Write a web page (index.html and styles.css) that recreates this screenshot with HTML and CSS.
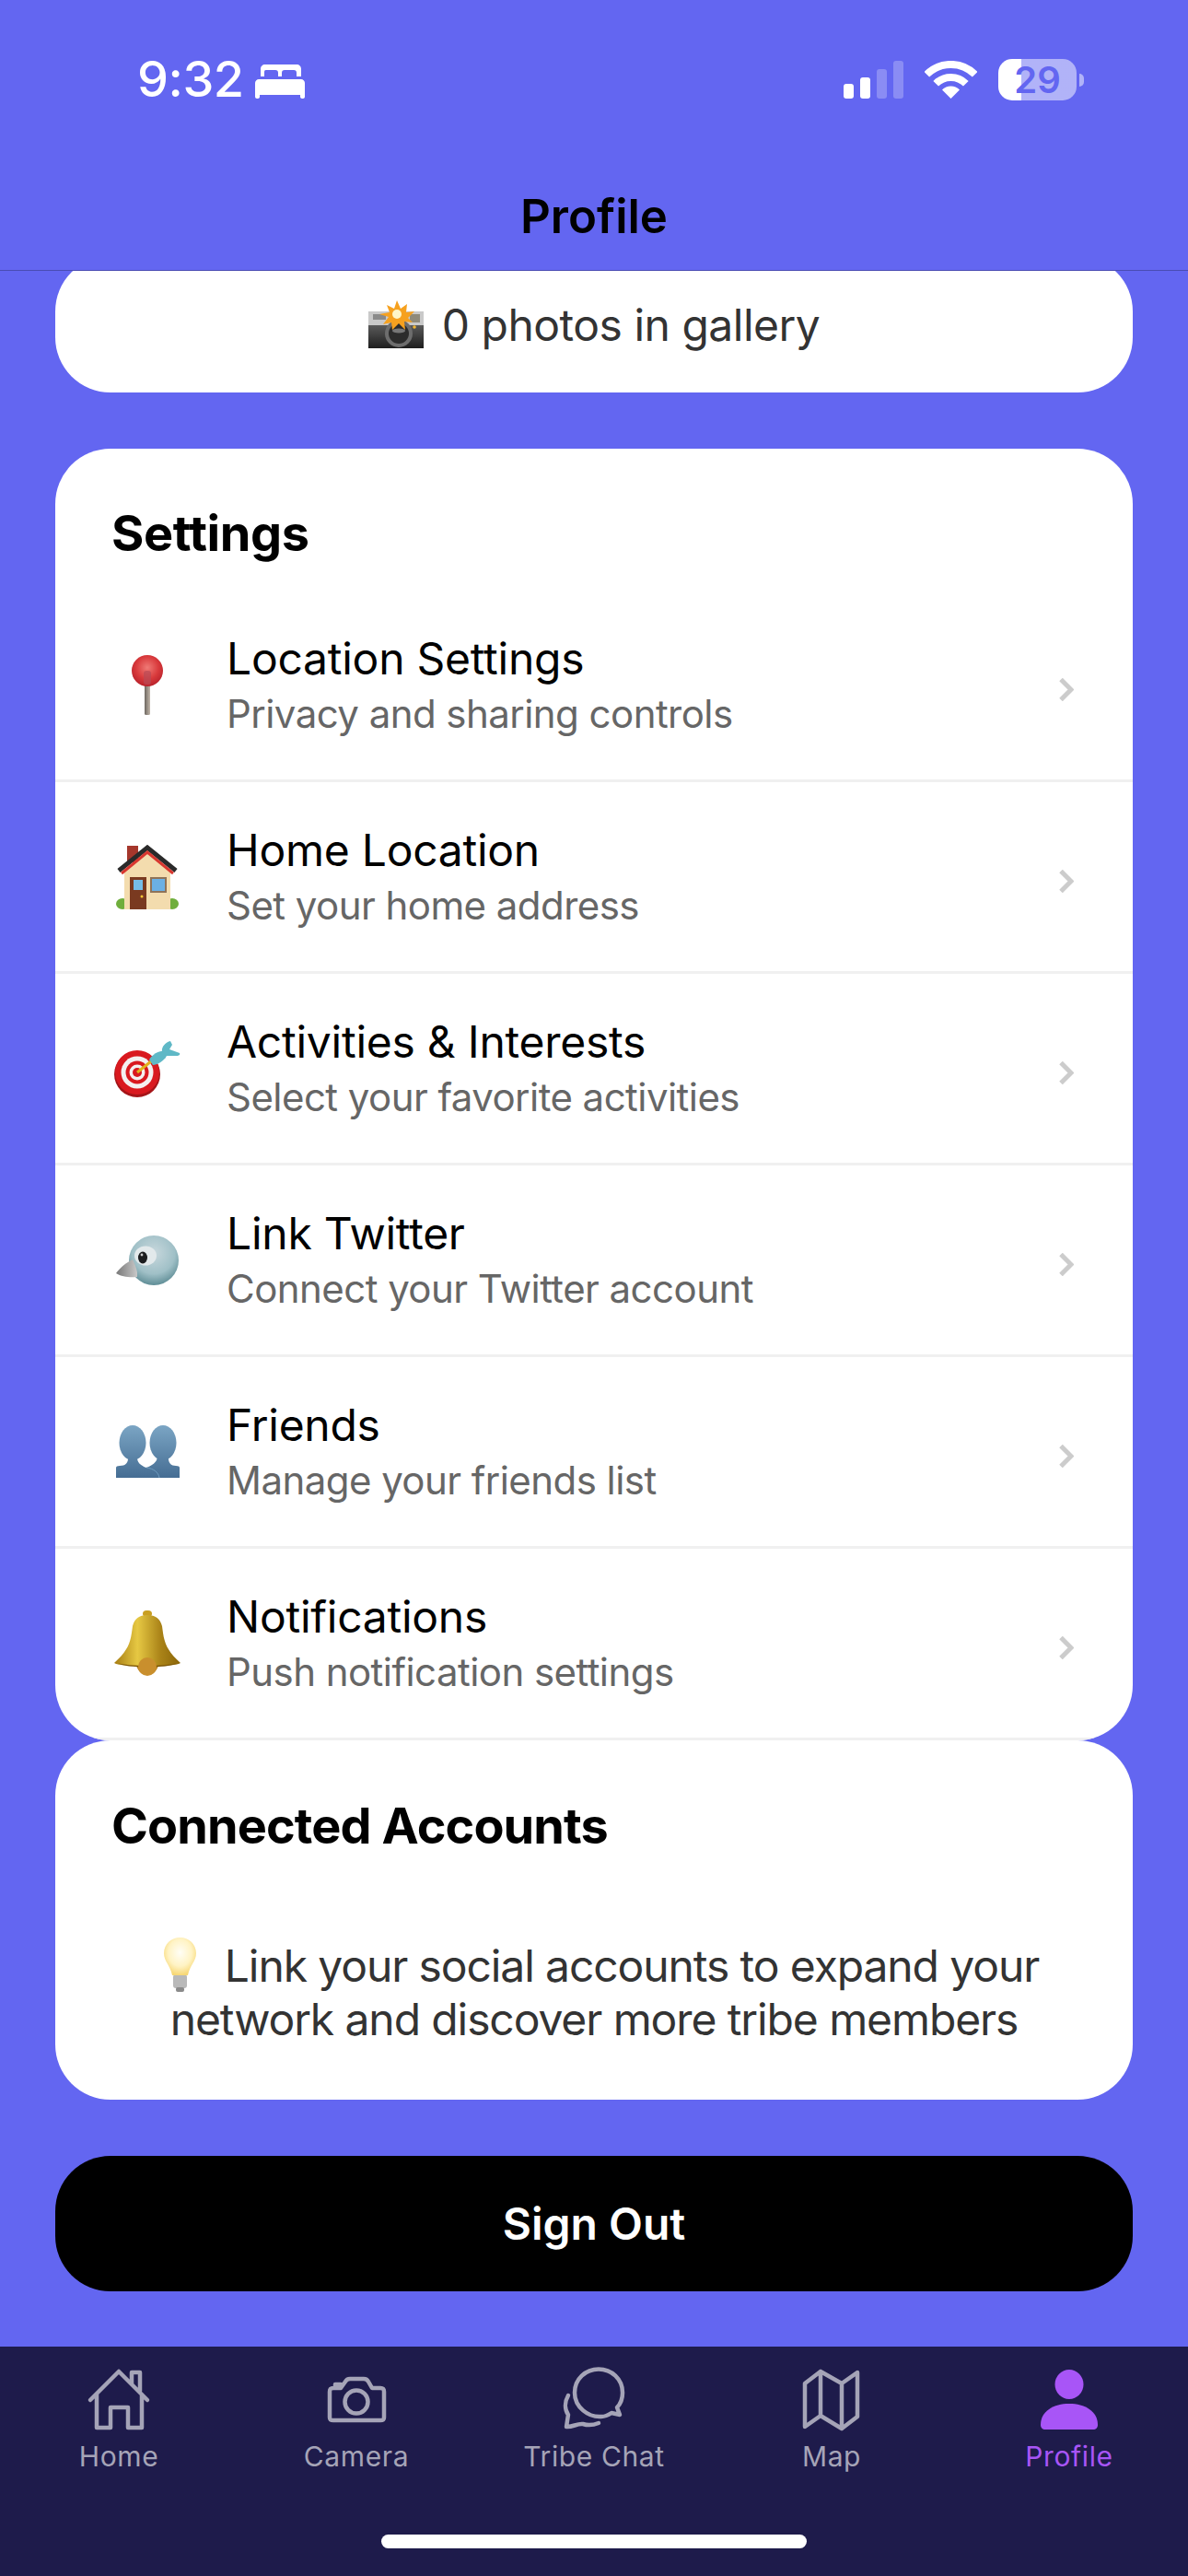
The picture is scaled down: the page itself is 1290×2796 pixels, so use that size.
FILE: index.html
```html
<!DOCTYPE html>
<html lang="en">
<head>
<meta charset="utf-8">
<title>Profile</title>
<link rel="stylesheet" href="styles.css">
</head>
<body>
<div class="app">
  <header class="header">
    <div class="status">
      <div class="status-left">
        <span class="time">9:32</span>
        <svg class="bed" viewBox="0 0 54 37"><path fill="#fff" d="M6 13V5c0-3 2-5 5-5h34c3 0 5 2 5 5v8h-5V9c0-2-1-3-3-3H32c-2 0-3 1-3 3v4h-4V9c0-2-1-3-3-3H12c-2 0-2 1-2 3v4z"/><path fill="#fff" d="M4 16h46c2 0 4 2 4 4v15c0 1-1 2-2 2h-1c-1 0-2-1-2-2v-2H5v2c0 1-1 2-2 2H2c-1 0-2-1-2-2V20c0-2 2-4 4-4z"/></svg>
      </div>
      <div class="status-right">
        <div class="signal"><i class="bar b1"></i><i class="bar b2"></i><i class="bar b3 dim"></i><i class="bar b4 dim"></i></div>
        <svg class="wifi" viewBox="0 0 57 41"><path fill="none" stroke="#fff" stroke-width="8" d="M2.3 14.800A37 37 0 0 1 54.700 14.800M12.200 24.700A23 23 0 0 1 44.800 24.700"/><path fill="#fff" d="M28.500 41L19 31.500A13.400 13.400 0 0 1 38 31.500Z"/></svg>
        <div class="battery"><div class="battery-body">29</div><div class="battery-nub"></div></div>
      </div>
    </div>
    <h1 class="title">Profile</h1>
  </header>

  <main class="main">
    <section class="card gallery">
      <svg class="emoji-cam" viewBox="0 0 60 52">
        <defs><linearGradient id="camb" x1="0" y1="0" x2="0" y2="1"><stop offset="0" stop-color="#5a5a5a"/><stop offset="1" stop-color="#1e1e1e"/></linearGradient></defs>
        <rect x="0" y="12" width="60" height="17" fill="#c9c9c9"/>
        <rect x="0" y="27" width="60" height="25" fill="url(#camb)"/>
        <rect x="5" y="15" width="14" height="6" fill="#8a8a8a"/>
        <rect x="45" y="15" width="11" height="9" fill="#8f8a7a"/>
        <circle cx="33" cy="36" r="15" fill="#6d6d6d"/><circle cx="33" cy="36" r="11" fill="#2c2c2c"/><ellipse cx="33" cy="33" rx="7" ry="2.500" fill="#777"/>
        <circle cx="50" cy="29" r="1.800" fill="#f2b632"/>
        <path fill="#f6a11f" d="M31 0l4 9 7-5-1 9 9-1-7 7 5 5-9-1 1 9-7-7-7 7-1-8-9 2 6-8-10-3 11-2-3-8 8 4z"/>
        <circle cx="31" cy="15" r="5" fill="#fff6c8"/>
      </svg>
      <span>0 photos in gallery</span>
    </section>

    <section class="card settings">
      <h2 class="card-title">Settings</h2>
      <div class="row">
        <div class="row-icon">
          <svg class="e-pin" viewBox="0 0 34 65">
            <defs><radialGradient id="pinr" cx=".5" cy=".4" r=".6"><stop offset="0" stop-color="#ef7a76"/><stop offset=".6" stop-color="#d93a3c"/><stop offset="1" stop-color="#b9222c"/></radialGradient><linearGradient id="pins" x1="0" x2="1" y1="0" y2="0"><stop offset="0" stop-color="#6d6760"/><stop offset="1" stop-color="#c2b6aa"/></linearGradient></defs>
            <rect x="14" y="30" width="6" height="35" rx="1.500" fill="url(#pins)"/>
            <circle cx="17" cy="17" r="17" fill="url(#pinr)"/>
            <rect x="13" y="17" width="8" height="15" rx="3" fill="#b84a55" opacity=".7"/>
          </svg>
        </div>
        <div class="row-text"><div class="row-title">Location Settings</div><div class="row-sub">Privacy and sharing controls</div></div>
        <svg class="chev" viewBox="0 0 16 25"><path fill="none" stroke="#ccc" stroke-width="5" d="M2 1.500L13 12.500L2 23.500"/></svg>
      </div>
      <div class="row">
        <div class="row-icon">
          <svg class="e-house" viewBox="0 0 68 70">
            <ellipse cx="7" cy="64" rx="7" ry="6" fill="#6fae3c"/><ellipse cx="61" cy="64" rx="7" ry="6" fill="#6fae3c"/>
            <rect x="12" y="1" width="12" height="18" fill="#a5372c"/>
            <path fill="#f3dcae" d="M9 28L34 6l25 22v42H9z"/>
            <path fill="none" stroke="#2a2a2a" stroke-width="5" d="M3 28L34 3l31 25"/>
            <path fill="none" stroke="#d8372f" stroke-width="3" d="M6 31L34 8l28 23"/>
            <rect x="15" y="35" width="18" height="35" fill="#7a3a20"/><rect x="19" y="38" width="10" height="11" fill="#76bde8"/><circle cx="28" cy="56" r="1.500" fill="#f5c633"/>
            <rect x="37" y="35" width="18" height="17" fill="#8f7358"/><rect x="39" y="37" width="14" height="13" fill="#6bb0e4"/>
          </svg>
        </div>
        <div class="row-text"><div class="row-title">Home Location</div><div class="row-sub">Set your home address</div></div>
        <svg class="chev" viewBox="0 0 16 25"><path fill="none" stroke="#ccc" stroke-width="5" d="M2 1.500L13 12.500L2 23.500"/></svg>
      </div>
      <div class="row">
        <div class="row-icon">
          <svg class="e-target" viewBox="0 0 72 62">
            <circle cx="25" cy="37" r="25" fill="#a51418"/><circle cx="25" cy="35" r="24" fill="#d9191f"/><circle cx="25" cy="35" r="17.500" fill="#f4f0f0"/><circle cx="25" cy="35" r="12.500" fill="#d9191f"/><circle cx="25" cy="35" r="8.500" fill="#f4f0f0"/><circle cx="25" cy="35" r="5" fill="#d9191f"/>
            <path stroke="#e2b11a" stroke-width="3" d="M25 35L40 23"/>
            <path fill="#5fb8c6" d="M38 21c4-6 11-10 17-9l2 5c-3 6-11 10-15 10z"/>
            <path fill="#5fb8c6" d="M52 13c-1-6 4-11 9-12l2 4-3 5 11 4c1 2-1 3-3 3l-9 0-3 0z"/>
          </svg>
        </div>
        <div class="row-text"><div class="row-title">Activities &amp; Interests</div><div class="row-sub">Select your favorite activities</div></div>
        <svg class="chev" viewBox="0 0 16 25"><path fill="none" stroke="#ccc" stroke-width="5" d="M2 1.500L13 12.500L2 23.500"/></svg>
      </div>
      <div class="row">
        <div class="row-icon">
          <svg class="e-bird" viewBox="0 0 68 54">
            <defs><radialGradient id="birdr" cx=".5" cy=".35" r=".68"><stop offset="0" stop-color="#c8d8dd"/><stop offset=".62" stop-color="#a0c0c7"/><stop offset="1" stop-color="#578790"/></radialGradient><linearGradient id="beak" x1="0" x2="1" y1="0" y2="0"><stop offset="0" stop-color="#777"/><stop offset="1" stop-color="#c8c8c8"/></linearGradient></defs>
            <circle cx="41" cy="27" r="27" fill="url(#birdr)"/>
            <ellipse cx="32" cy="22" rx="12" ry="10.500" fill="#e2e9eb"/>
            <ellipse cx="29" cy="24" rx="5" ry="6.500" fill="#1b1d1f"/><circle cx="28" cy="21" r="1.400" fill="#ccc"/>
            <path fill="url(#beak)" d="M0 41C5 34 12 29 18 26c2 4 4 9 5 14l0 5c-7 1-17 0-23-4z"/>
          </svg>
        </div>
        <div class="row-text"><div class="row-title">Link Twitter</div><div class="row-sub">Connect your Twitter account</div></div>
        <svg class="chev" viewBox="0 0 16 25"><path fill="none" stroke="#ccc" stroke-width="5" d="M2 1.500L13 12.500L2 23.500"/></svg>
      </div>
      <div class="row">
        <div class="row-icon">
          <svg class="e-busts" viewBox="0 0 69 57">
            <defs><linearGradient id="bust" gradientUnits="userSpaceOnUse" x1="0" x2="0" y1="0" y2="57"><stop offset="0" stop-color="#7ba5c4"/><stop offset="1" stop-color="#456d93"/></linearGradient></defs>
            <ellipse cx="18" cy="19" rx="14.500" ry="19" fill="url(#bust)"/>
            <ellipse cx="51" cy="19" rx="14.500" ry="19" fill="url(#bust)"/>
            <path fill="url(#bust)" d="M0 57V46Q0 44 4 44C10 44 14 41 13 33H23C22 40 27 44 33 46 38 44 45 41 45 33H57C56 41 60 44 65 44Q69 44 69 46V57Z"/>
            <path fill="none" stroke="#6f9cbf" stroke-width="1" d="M33 46c8 1 13 5 14 11"/>
          </svg>
        </div>
        <div class="row-text"><div class="row-title">Friends</div><div class="row-sub">Manage your friends list</div></div>
        <svg class="chev" viewBox="0 0 16 25"><path fill="none" stroke="#ccc" stroke-width="5" d="M2 1.500L13 12.500L2 23.500"/></svg>
      </div>
      <div class="row">
        <div class="row-icon">
          <svg class="e-bell" viewBox="0 0 72 71">
            <defs><linearGradient id="bell" x1="0" x2="1" y1="0" y2="0"><stop offset="0" stop-color="#a67c12"/><stop offset=".35" stop-color="#e6c843"/><stop offset=".7" stop-color="#aa8318"/><stop offset="1" stop-color="#8a6508"/></linearGradient></defs>
            <rect x="31" y="0" width="10" height="7" rx="4" fill="#c99f22"/>
            <ellipse cx="36" cy="57" rx="12" ry="13" fill="#b9801c"/>
            <path fill="url(#bell)" d="M36 5c-9 0-14 4-16 12-2 14-2 24-20 40 8 5 64 5 72 0C54 41 54 31 52 17 50 9 45 5 36 5z"/>
            <path fill="#7a5405" d="M4 57c10 4 54 4 64 0-8 6-56 6-64 0z"/>
            <ellipse cx="36" cy="61" rx="10" ry="10" fill="#c98f2d"/>
          </svg>
        </div>
        <div class="row-text"><div class="row-title">Notifications</div><div class="row-sub">Push notification settings</div></div>
        <svg class="chev" viewBox="0 0 16 25"><path fill="none" stroke="#ccc" stroke-width="5" d="M2 1.500L13 12.500L2 23.500"/></svg>
      </div>
    </section>

    <section class="card accounts">
      <h2 class="card-title">Connected Accounts</h2>
      <p class="hint"><svg class="e-bulb" viewBox="0 0 35 59">
        <defs><radialGradient id="bulb" cx=".5" cy=".4" r=".6"><stop offset="0" stop-color="#fffef6"/><stop offset=".6" stop-color="#fff3c4"/><stop offset="1" stop-color="#f7d774"/></radialGradient></defs>
        <rect x="10" y="40" width="15" height="15" rx="3" fill="#b9b9b9"/><rect x="13" y="54" width="9" height="5" rx="2" fill="#8a8a8a"/>
        <path fill="url(#bulb)" d="M17.500 0C8 0 0 7 0 17c0 9 7 13 9 24h17c2-11 9-15 9-24C35 7 27 0 17.500 0z"/>
      </svg>Link your social accounts to expand your network and discover more tribe members</p>
    </section>

    <button class="signout" type="button">Sign Out</button>
  </main>

  <nav class="tabbar">
    <div class="tabs">
      <div class="tab">
        <svg class="tab-icon" viewBox="0 0 72 72"><path d="M5 36L36 5l31 31M12 30v36h15V44h19v22h15V30M50 18V6h9v20"/></svg>
        <span>Home</span>
      </div>
      <div class="tab">
        <svg class="tab-icon" viewBox="0 0 72 72"><path d="M11 23h8l5-7c1-2 3-3 5-3h15c2 0 4 1 5 3l4 7h9c3 0 4 1 4 4v28c0 2-1 3-4 3H11c-3 0-4-1-4-3V27c0-3 1-4 4-4zM13 22v-3h6"/><circle cx="36" cy="38" r="12.500"/></svg>
        <span>Camera</span>
      </div>
      <div class="tab">
        <svg class="tab-icon" viewBox="0 0 72 72"><path d="M44 54C30 55 15 44 15 28 15 13 27 2.500 41 2.500S67 13 67 28c0 7-2 12-6 16l3 8-9-2c-3 2-7 4-11 4zM8 31c-4 7-4 15 0 21l-2 13c6 1 12-4 18-3 6 2 12 1 17-1"/></svg>
        <span>Tribe Chat</span>
      </div>
      <div class="tab">
        <svg class="tab-icon" viewBox="0 0 72 72"><path d="M24 5L7 18v47l17-12 23 14 17-13V6L47 18zM24 5v48M47 18v49"/></svg>
        <span>Map</span>
      </div>
      <div class="tab active">
        <svg class="tab-icon" viewBox="0 0 72 72"><ellipse cx="36" cy="19" rx="15.500" ry="16"/><path d="M5 63c0-15 14-23 31-23s31 8 31 23c0 3-2 5-5 5H10c-3 0-5-2-5-5z"/></svg>
        <span>Profile</span>
      </div>
    </div>
    <div class="home-indicator"></div>
  </nav>
</div>
</body>
</html>
```

FILE: styles.css
```css
* { box-sizing: border-box; }
html, body { margin: 0; padding: 0; }
body {
  width: 1290px;
  height: 2796px;
  overflow: hidden;
  background: #6366f1;
  font-family: Inter, "Liberation Sans", sans-serif;
}
.app { display: flex; flex-direction: column; height: 2796px; }

.header {
  height: 294px;
  flex: none;
  background: #6366f1;
  border-bottom: 1px solid rgba(0, 0, 0, .25);
  position: relative;
  z-index: 1;
}
.status {
  display: flex;
  justify-content: space-between;
  align-items: flex-start;
  padding: 64px 113px 0 149px;
  height: 204px;
}
.status-left { display: flex; align-items: flex-start; gap: 11px; }
.time {
  font-size: 54px;
  line-height: 44px;
  font-weight: 500;
  color: #fff;
  letter-spacing: -0.5px;
}
.bed { width: 54px; height: 37px; margin: 6px 0 0 1px; }
.status-right { display: flex; align-items: flex-start; }
.signal { display: flex; align-items: flex-end; gap: 7px; height: 41px; margin-top: 2px; }
.bar { display: block; width: 11px; border-radius: 3px; background: #fff; }
.b1 { height: 16px; }
.b2 { height: 23px; }
.b3 { height: 32px; }
.b4 { height: 41px; }
.dim { opacity: .25; }
.wifi { width: 57px; height: 41px; margin: 2px 0 0 23px; }
.battery { display: flex; align-items: center; margin-left: 23px; }
.battery-body {
  width: 85px;
  height: 45px;
  border-radius: 15px;
  background: linear-gradient(90deg, #fff 0 29%, rgba(255, 255, 255, .5) 29%);
  color: #6366f1;
  font-size: 40px;
  line-height: 45px;
  font-weight: 600;
  text-align: center;
}
.battery-nub {
  width: 5px;
  height: 14px;
  margin-left: 3px;
  border-radius: 0 5px 5px 0;
  background: rgba(255, 255, 255, .5);
}
.title {
  margin: 0;
  text-align: center;
  font-size: 51px;
  line-height: 62px;
  font-weight: 600;
  color: #000;
}

.main {
  flex: 1;
  min-height: 0;
  overflow: hidden;
  padding: 0 60px;
  display: flex;
  flex-direction: column;
}
.card { background: #fff; border-radius: 60px; overflow: hidden; flex: none; }
.gallery {
  margin-top: -16px;
  height: 148px;
  display: flex;
  align-items: center;
  justify-content: center;
  gap: 20px;
  font-size: 48px;
  letter-spacing: -0.5px;
  color: #333;
}
.emoji-cam { width: 60px; height: 52px; }
.settings { margin-top: 61px; padding-top: 59px; height: 1402px; }
.card-title {
  margin: 0;
  padding: 0 61px;
  font-size: 54px;
  line-height: 66px;
  font-weight: 700;
  color: #000;
  letter-spacing: -0.9px;
}
.settings .card-title { height: 95px; letter-spacing: -0.4px; }
.row {
  height: 208px;
  border-bottom: 3px solid #f0f0f0;
  padding: 0 60px 0 61px;
  display: flex;
  align-items: center;
}
.row-icon { width: 78px; margin-right: 47px; flex: none; display: flex; justify-content: center; }
.row-text { flex: 1; min-width: 0; margin-bottom: 2px; }
.row-title { font-size: 48px; line-height: 60px; color: #000; font-weight: 400; letter-spacing: -0.25px; }
.row-sub { font-size: 42px; line-height: 52px; margin-top: 4px; color: #666; letter-spacing: -0.55px; }
.chev { width: 16px; height: 25px; margin: 10px 4px 0 0; flex: none; }
.e-pin { width: 34px; height: 65px; }
.e-house { width: 68px; height: 70px; }
.e-target { width: 72px; height: 62px; }
.e-bird { width: 68px; height: 54px; }
.e-busts { width: 69px; height: 57px; }
.e-bell { width: 72px; height: 71px; }

.accounts { height: 390px; padding-top: 60px; }
.hint {
  margin: 88px 0 0;
  padding: 0 60px;
  text-align: center;
  font-size: 48px;
  line-height: 58px;
  letter-spacing: -1.1px;
  color: #333;
}
.e-bulb { width: 35px; height: 59px; vertical-align: -11px; margin: 0 31px 0 16px; }

.signout {
  display: block;
  flex: none;
  width: 100%;
  height: 147px;
  margin-top: 61px;
  border: 0;
  border-radius: 60px;
  background: #000;
  color: #fff;
  font-family: inherit;
  font-size: 48px;
  font-weight: 600;
}

.tabbar {
  flex: none;
  height: 249px;
  background: #1e1b4b;
  padding-top: 22px;
}
.tabs { display: flex; }
.tab {
  width: 258px;
  display: flex;
  flex-direction: column;
  align-items: center;
  color: #a5a4b7;
  font-size: 30px;
  line-height: 36px;
  letter-spacing: .6px;
}
.tab span { margin-top: 7px; }
.tab-icon {
  display: block;
  width: 72px;
  height: 72px;
  fill: none;
  stroke: #a5a4b7;
  stroke-width: 4.5;
  stroke-linejoin: round;
  stroke-linecap: round;
}
.active { color: #a855f7; }
.active .tab-icon { fill: #a855f7; stroke: none; }
.home-indicator {
  width: 462px;
  height: 15px;
  margin: 67px auto 0;
  border-radius: 8px;
  background: #fff;
}
```
